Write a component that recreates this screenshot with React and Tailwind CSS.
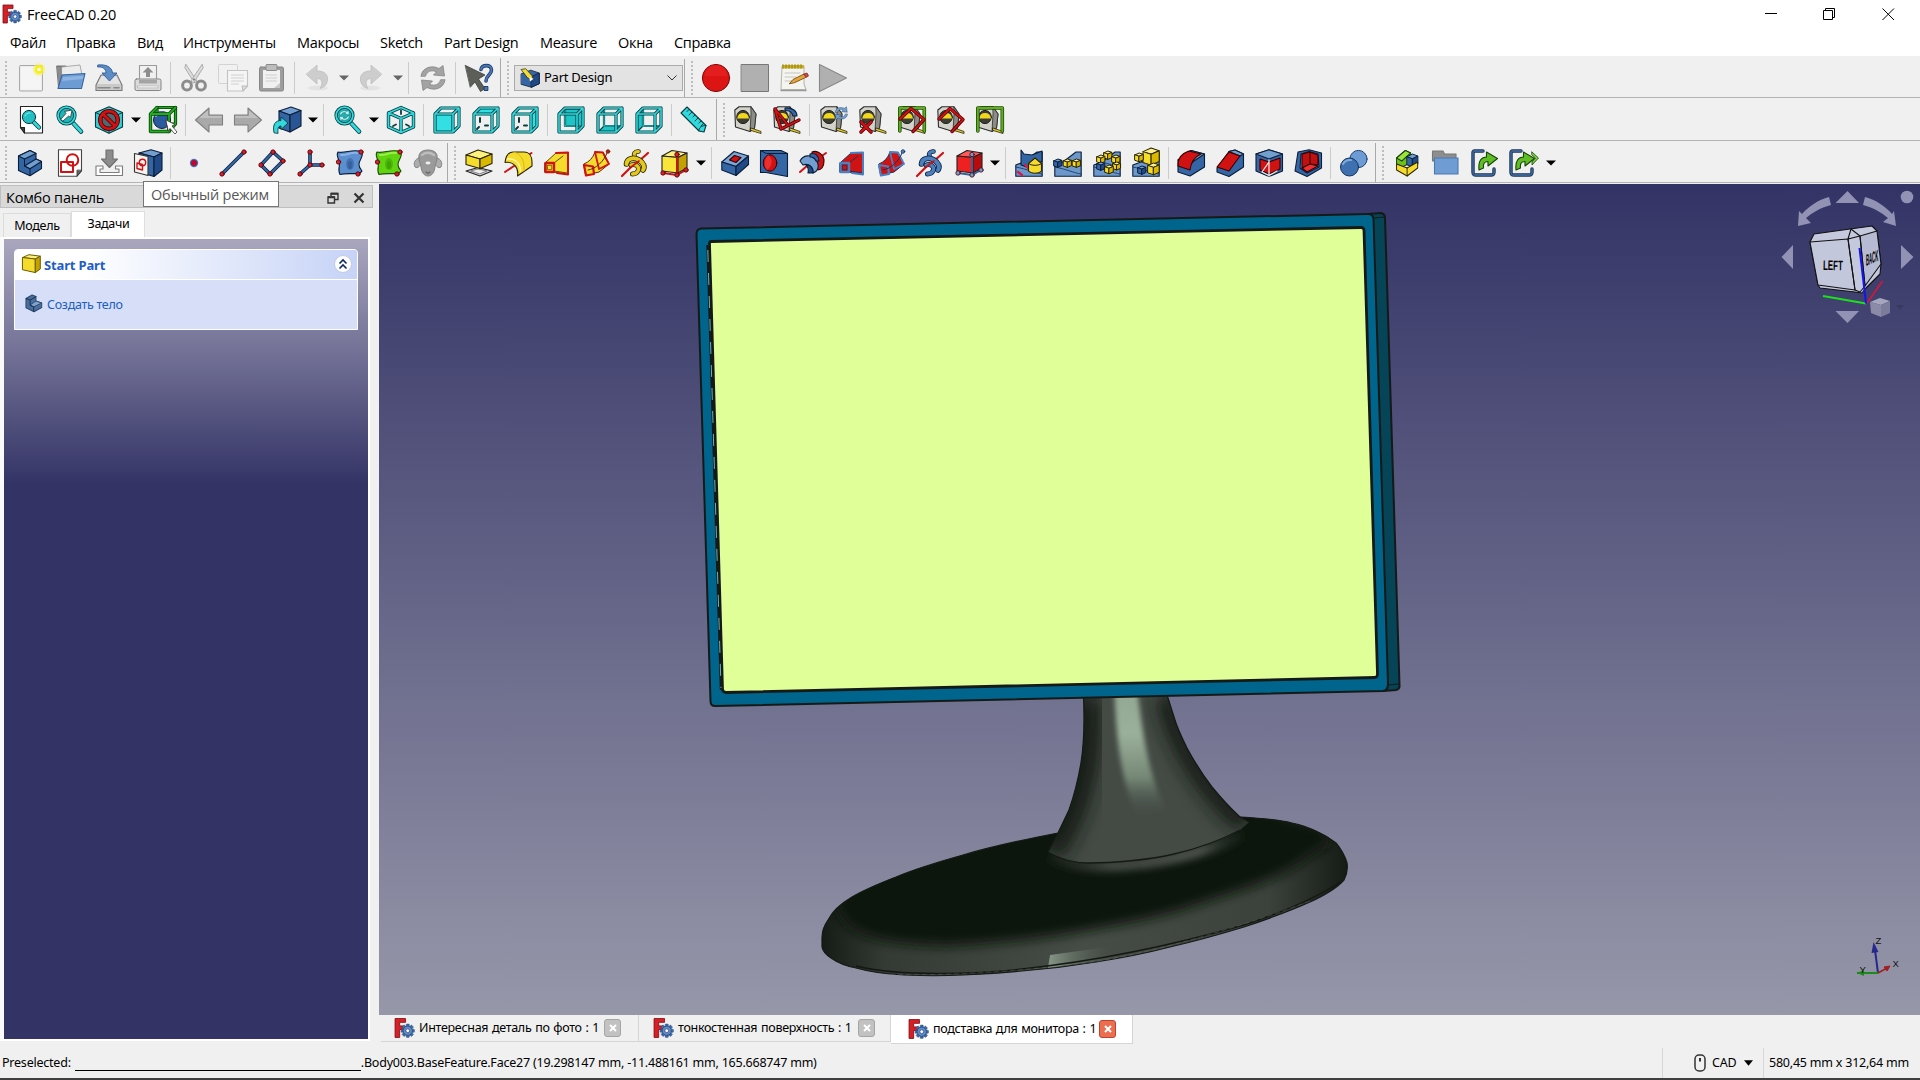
import React from "react";

const NAVY = "#0b1e38";
const BLUE = "#3465a4";
const SKY = "#729fcf";
const TEAL = "#2fd9dc";
const DTEAL = "#0a3c40";
const RED = "#d01212";
const YEL = "#f5dc2c";
const DYEL = "#c4a000";
const BROWN = "#2b2300";

/* ---------- drawing helpers ---------- */

function Icon({ children, size = "h-7 w-7" }) {
  return (
    <svg viewBox="0 0 28 28" className={`${size} shrink-0 overflow-visible`} strokeLinejoin="round" strokeLinecap="round" fill="none">
      {children}
    </svg>
  );
}

const P = ({ d, f = "none", s = NAVY, w = 1.1, ...r }) => <path d={d} fill={f} stroke={s} strokeWidth={w} {...r} />;

/* stroke with a darker outline */
const Duo = ({ d, c, o, w = 2, e = 1.6 }) => (
  <>
    <path d={d} stroke={o} strokeWidth={w + e} />
    <path d={d} stroke={c} strokeWidth={w} />
  </>
);

const Dot = ({ x, y, r = 2.2, c = "#d4202c", s = "#4a0006" }) => <circle cx={x} cy={y} r={r} fill={c} stroke={s} strokeWidth="0.8" />;

function Box({ x, y, k = 1, t, l, r, s = NAVY }) {
  return (
    <g transform={`translate(${x} ${y}) scale(${k})`}>
      <P d="M0 4 L9 0 L18 3 L9 7 Z" f={t} s={s} w={1 / k} />
      <P d="M0 4 L9 7 V19 L0 16 Z" f={l} s={s} w={1 / k} />
      <P d="M9 7 L18 3 V15 L9 19 Z" f={r} s={s} w={1 / k} />
    </g>
  );
}

const YBox = ({ x, y, k }) => <Box x={x} y={y} k={k} t="#fcf08a" l={YEL} r="#d8b800" s={BROWN} />;
const BBox = ({ x, y, k }) => <Box x={x} y={y} k={k} t={SKY} l={BLUE} r="#204a87" />;

function Logo({ className }) {
  const teeth = [0, 45, 90, 135, 180, 225, 270, 315];
  return (
    <svg viewBox="0 0 20 20" className={className}>
      <path d="M1 1 H11 V4.6 H5.4 V8 H9.5 V11.4 H5.4 V19 H1 Z" fill="#d81f26" stroke="#7c0e12" strokeWidth="0.8" />
      {teeth.map((a) => (
        <rect key={a} x="11.6" y="6.2" width="3" height="4" rx="0.6" fill="#3f6aa8" stroke="#274a7c" strokeWidth="0.4" transform={`rotate(${a} 13.1 12.6)`} />
      ))}
      <circle cx="13.1" cy="12.6" r="4.4" fill="#5f8bc6" stroke="#274a7c" strokeWidth="0.8" />
      <circle cx="13.1" cy="12.6" r="1.8" fill="#fff" stroke="#274a7c" strokeWidth="0.7" />
    </svg>
  );
}

/* ---------- file toolbar ---------- */

const NewDoc = () => (
  <Icon>
    <rect x="2.5" y="1.5" width="23" height="25.5" rx="1" fill="#ececec" stroke="#a9a9a9" />
    <rect x="4" y="3" width="20" height="22.5" fill="#f5f5f5" />
    <circle cx="22" cy="5.5" r="6.3" fill="#f6f06a" opacity=".6" />
    <circle cx="22" cy="5.5" r="4.3" fill="#f7ef1c" />
    <circle cx="22" cy="5.5" r="1.8" fill="#fff" />
  </Icon>
);
const OpenDoc = () => (
  <Icon>
    <P d="M1 2 H10 L12 5 H24 V24 H3 Z" f="#8a8a8a" s="#555" w={0.8} />
    <P d="M6 3 L24 1 L26 11 H6 Z" f="#ececec" s="#999" w={0.8} />
    <P d="M6 11 L29 9.5 L25.5 24.5 H2 Z" f="#6d9bd3" s="#3465a4" />
    <path d="M7 13 L27.5 11.7 L26.7 15 L6 17 Z" fill="#8eb5e2" />
  </Icon>
);
const SaveDoc = () => (
  <Icon>
    <P d="M6 11 H22 L27 21 V26.5 H1 V21 Z" f="#c9c9c9" s="#777" />
    <path d="M6.6 12 H21.4 L25.5 20 H2.5 Z" fill="#e3e3e3" />
    <path d="M3 23.8 H15 M19 23.8 h5" stroke="#888" strokeWidth="1.6" />
    <P d="M3 1 C11 0 17 3 17.5 9 H22 L14.5 17 L7 9 H11 C11 5 8 2.5 3 3 Z" f="#5c8cc5" s="#2e5b95" w={0.9} />
  </Icon>
);
const PrintDoc = () => (
  <Icon>
    <P d="M5.5 1.5 H22.5 V16 H5.5 Z" f="#f1f1f1" s="#9a9a9a" />
    <path d="M14 3 L19.5 8.5 H16 V13 H12 V8.5 H8.5 Z" fill="#8d8d8d" />
    <rect x="1" y="15" width="26" height="11.5" rx="1.5" fill="#dadada" stroke="#858585" />
    <rect x="5" y="16" width="18" height="3.5" fill="#a4a4a4" />
    <rect x="4" y="22" width="20" height="1.8" fill="#fff" stroke="#999" strokeWidth=".5" />
  </Icon>
);
const CutI = () => (
  <Icon>
    <P d="M6 0.5 L17 17 L14.5 19 L5 4 Z" f="#dcdcdc" s="#a5a5a5" w={0.9} />
    <P d="M22 0.5 L11 17 L13.5 19 L23 4 Z" f="#dcdcdc" s="#a5a5a5" w={0.9} />
    <ellipse cx="7" cy="21.5" rx="4.4" ry="4.6" stroke="#8c8c8c" strokeWidth="3" />
    <ellipse cx="21" cy="21.5" rx="4.4" ry="4.6" stroke="#8c8c8c" strokeWidth="3" />
    <circle cx="14" cy="15.5" r="1" fill="#777" />
  </Icon>
);
const CopyI = () => (
  <Icon>
    <rect x="-0.5" y="0.5" width="19" height="19" rx="1" fill="#f1f1f1" stroke="#d3d3d3" />
    <P d="M8.5 6.5 H28.5 V22 L24 27 H8.5 Z" f="#f5f5f5" s="#c3c3c3" />
    <path d="M12 11 H25 M12 14 H25 M12 17 H25 M12 20 H20" stroke="#d0d0d0" strokeLinecap="butt" />
    <P d="M28.5 22 L24 27 L23 22 Z" f="#ddd" s="#bbb" />
  </Icon>
);
const PasteI = () => (
  <Icon>
    <rect x="1.5" y="3" width="24" height="24" rx="1.5" fill="#9d9d9d" stroke="#868686" />
    <rect x="5" y="6" width="17" height="18" fill="#f1f1f1" />
    <rect x="8" y="0.5" width="11" height="6" rx="1" fill="#bdbdbd" stroke="#8a8a8a" />
    <path d="M7.5 11 H19 M7.5 14 H19 M7.5 17 H19" stroke="#cfcfcf" strokeLinecap="butt" />
    <path d="M22 19 V24 H16 Z" fill="#c9c9c9" />
  </Icon>
);
const UndoI = ({ flip }) => (
  <Icon>
    <g transform={flip ? "translate(28 0) scale(-1 1)" : undefined}>
      <ellipse cx="15" cy="24" rx="10" ry="2.5" fill="#e3e3e3" />
      <P d="M14 1.5 V7 C22 7 25 11 24.5 16 C24 20 22 23 17 24.5 C20.5 19 19 14.5 14 14.5 V20 L3.5 10.5 Z" f="#cdcdcd" s="#bcbcbc" w={0.8} />
    </g>
  </Icon>
);
const RefreshShape = ({ c = "#a3a3a3", o = "#858585" }) => (
  <>
    <P d="M2 12 C3 4 12 0.5 20 4.5 L24 1.5 L25.5 12 L14.5 11 L17.5 7.8 C12 5.5 8 7.5 6.5 12 Z" f={c} s={o} w={0.8} />
    <P d="M26 16 C25 24 16 27.5 8 23.5 L4 26.5 L2.5 16 L13.5 17 L10.5 20.2 C16 22.5 20 20.5 21.5 16 Z" f={c} s={o} w={0.8} />
  </>
);
const RefreshI = () => <Icon><RefreshShape /></Icon>;
const WhatsI = () => (
  <Icon>
    <P d="M0.5 1.5 L20 11 L13.5 15 L20 24.5 L15.5 27.5 L10 18 L5.5 23 Z" f="#5b5f58" s="#3c3f3a" w={0.8} />
    <Duo d="M16 5.5 C17 0.5 26.5 0 26.5 6 C26.5 11 21 11 21 17" c="#4a7ab8" o="#1d3d6b" w={1.8} e={1.8} />
    <rect x="19.5" y="22.5" width="3.4" height="4" fill="#4a7ab8" stroke="#1d3d6b" />
  </Icon>
);
const RecordI = () => (
  <Icon>
    <circle cx="14" cy="14" r="13.6" fill="#dc1414" stroke="#7d0808" />
    <path d="M3 12 A11 11 0 0 1 25 12 Z" fill="#e92424" opacity=".6" />
  </Icon>
);
const StopI = () => <Icon><rect x="0.5" y="0.5" width="27" height="27" fill="#b0b0b0" stroke="#777" /></Icon>;
const PlayI = () => <Icon><P d="M0.5 0.5 L27.5 14 L0.5 27.5 Z" f="#b0b0b0" s="#888" /></Icon>;
const NoteI = () => (
  <Icon>
    <P d="M2 2.5 H24 V20 L26 25.5 H1 Z" f="#f4f4f1" s="#b9b9b2" />
    <rect x="2" y="1" width="22" height="3.4" fill="#c9ae1e" />
    <path d="M3 0.5v4M6 0.5v4M9 0.5v4M12 0.5v4M15 0.5v4M18 0.5v4M21 0.5v4" stroke="#8d7710" strokeWidth=".8" />
    <path d="M5 9 H20 M5 13 H16 M5 17 H12" stroke="#c5c5c0" />
    <path d="M1 26.5 H26" stroke="#999" strokeWidth="1.4" />
    <P d="M9.5 19.5 L13 15.5 L24 10 L26.5 13 L15 18.5 Z" f="#e5a53d" s="#7c4a10" w={0.9} />
    <P d="M24 10 L27 9 L28.5 12 L26.5 13 Z" f="#d04a4a" s="#7c1010" w={0.7} />
  </Icon>
);

/* ---------- view toolbar ---------- */

const Lens = () => (
  <>
    <Duo d="M17.5 17.5 L25 25.5" c={TEAL} o={DTEAL} w={3} />
    <circle cx="10.5" cy="9.5" r="8.4" fill="#1fb4b8" stroke={DTEAL} strokeWidth="3.4" />
    <circle cx="10.5" cy="9.5" r="8.4" stroke={TEAL} strokeWidth="1.8" />
  </>
);
const FitAll = () => (
  <Icon>
    <P d="M3.5 0.5 H25.5 V27 H7.5 L3.5 21.5 Z" f="#fff" s="#222" />
    <P d="M3.5 21.5 H7.5 V27 Z" f="#444" s="#222" />
    <Duo d="M16 15.5 L22 21.5" c={TEAL} o={DTEAL} w={2.6} />
    <circle cx="12" cy="11" r="6.6" fill="#23bfc2" stroke={DTEAL} strokeWidth="1" />
    <path d="M8 10 a4 4 0 0 1 5 -3" stroke="#7ff" />
  </Icon>
);
const FitSel = () => (
  <Icon>
    <Lens />
    <P d="M5 13 L10 7.5 L8.5 5.5 L16 4 L14.5 11.5 L12.6 10 L7 15 Z" f="#fff" s="#333" w={0.8} />
  </Icon>
);
const DrawStyle = () => (
  <Icon>
    <P d="M14 0.8 L27.5 6.5 V21 L14 27.2 L0.5 21 V6.5 Z" f="#2fcfd2" s={DTEAL} />
    <path d="M14 13 V27 M0.5 6.5 L14 13 L27.5 6.5" stroke={DTEAL} />
    <circle cx="14" cy="14" r="8.8" fill="#4d6a70" stroke="#4a0006" strokeWidth="4.4" />
    <path d="M8 8 L20 20" stroke="#4a0006" strokeWidth="4.4" />
    <circle cx="14" cy="14" r="8.8" stroke={RED} strokeWidth="2.8" />
    <path d="M8 8 L20 20" stroke={RED} strokeWidth="2.8" />
  </Icon>
);
const BoundSel = () => (
  <Icon>
    <Duo d="M8 1.5 H26.5 V18 L20 25.5 M8 1.5 V18 H26" c="#1fae1f" o="#0a3d0a" w={1.6} />
    <circle cx="13" cy="14" r="8.5" fill="#2b5a9e" stroke={NAVY} />
    <path d="M7 10 a8 8 0 0 1 9 -3" stroke="#8bb0dd" strokeWidth="2" />
    <Duo d="M1.5 8 H20 V25.5 H1.5 Z M1.5 8 L8 1.5 M20 8 L26.5 1.5" c="#1fae1f" o="#0a3d0a" w={1.8} />
    <P d="M17 14 L26 18.5 L23 20 L28 26 L26 28 L21 22.5 L19.5 25 Z" f="#fff" s="#333" w={0.8} />
  </Icon>
);
const Arrow = ({ flip }) => (
  <Icon>
    <g transform={flip ? "translate(28 0) scale(-1 1)" : undefined}>
      <P d="M0.5 14 L14 2 V9 H27.5 V19 H14 V26 Z" f="#a9a9a9" s="#808080" />
      <path d="M13 4.5 V10 H26.5 V12 H4 Z" fill="#c0c0c0" />
    </g>
  </Icon>
);
const LinkView = () => (
  <Icon>
    <P d="M6 5 L18 1 L28 4.5 L17 9 Z" f={SKY} />
    <P d="M6 5 L17 9 V26 L6 22 Z" f={BLUE} />
    <P d="M17 9 L28 4.5 V20 L17 26 Z" f="#2a5594" />
    <P d="M1 26.5 C-1 18 3 14.5 8 14.5 V11 L15 17 L8 23.5 V20 C5 20 4.5 23 5 27 Z" f={TEAL} s={DTEAL} w={0.9} />
  </Icon>
);
const SyncView = () => (
  <Icon>
    <Lens />
    <g transform="translate(4.6 3.6) scale(.42)"><RefreshShape c="#b9f4f5" o={DTEAL} /></g>
  </Icon>
);
const IsoI = () => (
  <Icon>
    <Duo d="M14 1.5 L26.5 7 V21 L14 26.5 L1.5 21 V7 Z M1.5 7 L14 12.5 L26.5 7 M14 12.5 V26.5" c={TEAL} o={DTEAL} w={1.8} />
    <path d="M14 4.5 V8 M6 20 L9 18.5 M22 20 L19 18.5" stroke={DTEAL} strokeWidth="1.8" />
  </Icon>
);

const FACES = {
  front: "M2 8 H20 V26 H2 Z",
  top: "M2 8 L8 2 H26 L20 8 Z",
  right: "M20 8 L26 2 V20 L20 26 Z",
  rear: "M8 3 H26 V20 H8 Z",
  bottom: "M2 26 L8 20 H26 L20 26 Z",
  left: "M2 8 L8 2 V20 L2 26 Z",
};
function ViewCube({ face }) {
  const open = face === "rear" || face === "bottom" || face === "left";
  return (
    <Icon>
      {open && <P d={FACES[face]} f="#1fc4c7" s={DTEAL} />}
      {open && <Duo d="M8 2 V20 M8 20 H26" c={TEAL} o={DTEAL} w={1} e={1.2} />}
      {!open && face !== "front" && <path d="M8 12 V16 M7 21 L5 23 M13 19.5 H16" stroke={DTEAL} strokeWidth="2" />}
      {!open && <P d={FACES[face]} f="#32dfe2" s={DTEAL} />}
      <Duo d="M2 8 L8 2 H26 V20 L20 26 H2 Z M2 8 H20 V26 M20 8 L26 2" c={TEAL} o={DTEAL} w={1.6} />
    </Icon>
  );
}
const Ruler = () => (
  <Icon>
    <P d="M2 7 L8 1 L27 19.5 L25 26 L20 25 Z" f={TEAL} s={DTEAL} />
    <path d="M10 3.5 L8 5.5 M13 6 L10 9 M16 9 L14 11 M19 12 L16 15 M22 15 L20 17 M24.5 17.5 L22 20" stroke={DTEAL} />
    <path d="M20 25 C19 22 23 19 27 19.5" stroke={DTEAL} />
  </Icon>
);

function Tape({ children }) {
  return (
    <Icon>
      <P d="M0.8 4 L5 0.8 H17 L22 8 L20.5 22 L16 25.5 L1.5 21 Z" f="#d2d2cb" s="#2b2b2b" />
      <P d="M17 1 L22 8 L20.5 22 L16 25.5 L17 8 Z" f="#8d8d86" s="#2b2b2b" w={0.8} />
      <ellipse cx="9" cy="11" rx="6.3" ry="6.6" fill="#3c3c34" stroke="#222" />
      <path d="M3.2 12.5 A6 6.6 0 0 1 15 12.5 Z" fill="#f1d81c" />
      <P d="M17 22 L27 25.5 V27.5 L17 24.5 Z" f="#e9cf14" s="#222" w={0.8} />
      {children}
    </Icon>
  );
}
const Green = () => <Duo d="M1.8 25 V2 H26.3 V25" c="#5fae1e" o="#1f4a05" w={2} />;
const Diamond = () => <Duo d="M2 13 L13 2.5 L26 13.5 L15 25.5" c={RED} o="#5a0008" w={1.8} />;

/* ---------- part design toolbar ---------- */

const BodyI = () => (
  <Icon>
    <P d="M1.5 7 L13 1.5 L19 4.500 V10 L24.5 12.500 V19.500 L13 26.8 L1.5 21.5 Z" f={BLUE} />
    <P d="M1.5 7 L13 1.5 L19 4.500 L7.500 10 Z" f={SKY} />
    <P d="M7.500 17 L19 10 L24.5 12.500 L13 19.8 Z" f={SKY} />
    <path d="M7.500 10 V17 L13 19.8 V26.500" stroke={NAVY} />
  </Icon>
);
const SketchShape = () => (
  <>
    <rect x="5" y="13" width="12" height="10" stroke={RED} strokeWidth="2" />
    <circle cx="16.5" cy="11" r="5.8" stroke={RED} strokeWidth="2" />
  </>
);
const SketchI = () => (
  <Icon>
    <P d="M2.5 0.8 H25.5 V22 L21 27.2 H2.5 Z" f="#fff" s="#444" />
    <SketchShape />
    <P d="M25.5 21.5 L21 27.2 V21.5 Z" f="#666" s="#333" w={0.8} />
  </Icon>
);
const MapI = () => (
  <Icon>
    <P d="M11 1 H18 V10 H22.5 L14.5 18.5 L6.5 10 H11 Z" f="#8c8c8c" s="#6e6e6e" />
    <P d="M1 17 H8 V20 H5 V23.5 H24 V20 H20.5 V17 H27.5 V26.5 H1 Z" f="#fff" s="#7c7c7c" />
  </Icon>
);
const ValidateI = () => (
  <Icon>
    <P d="M5 4 L17 0.8 L28 4 L20 8 Z" f={SKY} />
    <P d="M5 4 L20 8 V27.5 L5 23 Z" f={BLUE} />
    <P d="M20 8 L28 4 V21 L20 27.5 Z" f="#204a87" />
    <P d="M0.5 4.5 L14 7.500 V26.5 L0.5 23 Z" f="#f7f3f0" s="#333" />
    <path d="M3 14 l5.500 1.5 v5.5 l-5.500 -1.5 Z" stroke={RED} strokeWidth="1.4" />
    <circle cx="8.5" cy="13.5" r="3.2" stroke={RED} strokeWidth="1.4" />
  </Icon>
);
const PointI = () => (
  <Icon>
    <circle cx="14" cy="14" r="4.2" fill="#4a78b5" />
    <Dot x={14} y={14} r={2.7} c="#d4002a" s="#90123c" />
  </Icon>
);
const LineI = () => (
  <Icon>
    <Duo d="M3 25 L25 3" c={BLUE} o={NAVY} w={2} />
    <Dot x={3} y={25} /><Dot x={25} y={3} />
  </Icon>
);
const PlaneI = () => (
  <Icon>
    <Duo d="M15 3 L25 12 L12 25 L3 16 Z" c={BLUE} o={NAVY} w={2} />
    <Dot x={15} y={3} /><Dot x={25} y={12} /><Dot x={12} y={25} /><Dot x={3} y={16} />
  </Icon>
);
const CsysI = () => (
  <Icon>
    <Duo d="M13 3 V16 H25 M13 16 L3 25" c={BLUE} o={NAVY} w={2} />
    <Dot x={13} y={3} /><Dot x={13} y={16} /><Dot x={25} y={16} /><Dot x={3} y={25} />
  </Icon>
);
const BinderI = ({ c, h, s, m }) => (
  <Icon>
    <P d="M2 3 C9 5 17 -1 26 3 C28.500 10 18 13 26 22 C24 27 14 23 4 25.5 C1 20 5 15 3 12 C2 8 0 6 2 3 Z" f={c} s={s} />
    <ellipse cx="14" cy="15" rx="4" ry="6" fill={m} opacity=".35" />
    <ellipse cx="14" cy="16" rx="2.200" ry="4" fill={m} opacity=".35" />
    <path d="M5 6 C10 7 14 3 21 4" stroke={h} strokeWidth="2" />
    <Dot x={25} y={3} /><Dot x={22} y={25} /><Dot x={2.5} y={13} />
  </Icon>
);
const SheepI = () => (
  <Icon>
    <P d="M5 9 C1 10 -1 14 1 18 C4 20 6 17 8 13 Z M23 9 C27 10 29 14 27 18 C24 20 22 17 20 13 Z" f="#adadad" s="#7d7d7d" w={0.9} />
    <P d="M5 9 C4 4 8 1 14 1 C20 1 24 4 23 9 C23 13 21.500 14 21 18 C20.500 23 18 27 14 27 C10 27 7.500 23 7 18 C6.500 14 5 13 5 9 Z" f="#9a9a9a" s="#7d7d7d" w={0.9} />
    <path d="M8 6 c3 -3 8 -3 12 0" stroke="#bdbdbd" strokeWidth="2.400" />
    <path d="M12 23 l2 1.5 l2 -1.5" stroke="#666" strokeWidth="1.2" />
    <ellipse cx="14" cy="14" rx="2.500" ry="1.4" fill="#eee" />
  </Icon>
);
const PadI = () => (
  <Icon>
    <P d="M1 22 L13 18.5 L27 22 L15 27 Z" f="#d8d8d8" s="#222" />
    <path d="M6 22 L13 20 L22 22 L15 24.8 Z" stroke="#666" fill="#efefef" strokeWidth=".8" />
    <P d="M1 6 L13 1 L27 5 L15 10 Z" f="#fdf07c" s={BROWN} />
    <P d="M1 6 L15 10 V19.5 L1 15.5 Z" f={YEL} s={BROWN} />
    <P d="M15 10 L27 5 V14.5 L15 19.5 Z" f="#d8b800" s={BROWN} />
  </Icon>
);
const RevolveI = () => (
  <Icon>
    <path d="M22 8 L27.500 4 M1 23 L10 17" stroke={RED} strokeWidth="2" />
    <P d="M1 13.500 C2 6 5 3 9 3 H20 C25 3 28 7 28 13 V17 L13.500 27 C15 18 9 12 1 13.500 Z" f={YEL} s={BROWN} />
    <path d="M3.500 10 C10 9 16 13 16.500 22" stroke="#fff59c" strokeWidth="1.600" />
    <path d="M9 3 C16 4 21 10 20 22" stroke="#d6b91a" strokeWidth="1" />
  </Icon>
);
const LoftI = ({ c, e, d }) => (
  <Icon>
    <P d="M2 14 L13 4 L25 3.5 V25.500 L10 23 L2 23 Z" f={c} s={d} w={1} />
    <path d="M11 14 L20 7 M11 22 L24 24" stroke={d} />
    <path d="M13 4 L25 3.500 V25.500 L14 24" stroke={e} strokeWidth="2" />
    <rect x="2.5" y="14" width="8.500" height="9" fill={c} stroke={e} strokeWidth="2.4" />
    <rect x="4.8" y="16.3" width="4" height="4.4" stroke={d} strokeWidth=".8" />
  </Icon>
);
const SweepI = ({ c, e, d, p }) => (
  <Icon>
    <P d="M2 15 C7 13 11 9 13 3 L21 3.500 C22 8 25 12 27 15 L17 23 L4 26 Z" f={c} s={d} w={1} />
    <path d="M13 3 L21 3.500 L27 15 L17 20 Z" stroke={e} strokeWidth="1.800" />
    <path d="M2 16 L11 17.500 L12 25 L4 26.500 Z" stroke={e} strokeWidth="2.200" fill={c} />
    <path d="M6 21 C14 20 22 12 25 4" stroke={d} strokeWidth="1" />
    <Dot x={26} y={2.5} r={1.8} c={p} s={d} />
  </Icon>
);
const HelixI = ({ c, o }) => (
  <Icon>
    <path d="M1 27 L10 18 M18 12 L27 4" stroke={RED} strokeWidth="2.2" />
    <Duo d="M14 8 C12 5 14 2 17.500 2.500" c={c} o={o} w={3} />
    <Duo d="M5.500 15 C6 9 13 8 18 11 C23 14 24 18 22 21" c={c} o={o} w={4} />
    <Duo d="M10 16 C15 14 19 18 17 22 C16 24 13.500 25 11.500 25" c={c} o={o} w={3.400} />
    <path d="M10 18 L18 12" stroke={RED} strokeWidth="1.6" />
  </Icon>
);
const PrimI = ({ c, t, r, e, p }) => (
  <Icon>
    <P d="M2 7 L12 1.5 L27 4 L18 8.5 Z" f={t} s="#222" />
    <P d="M2 7 L18 8.5 V24 L2 22 Z" f={c} s="#222" />
    <P d="M18 8.5 L27 4 V19 L18 24 Z" f={r} s="#222" />
    <path d="M17 6 V25 M3 24 L17 26 L26 21" stroke={e} strokeWidth="2" />
    <Dot x={17} y={5.5} c={p} /><Dot x={3} y={24} c={p} /><Dot x={17} y={26} c={p} /><Dot x={26} y={21} c={p} />
  </Icon>
);
const PocketI = () => (
  <Icon>
    <P d="M0.8 13 L13 2.5 L27.5 7 L15 17.5 Z" f="#7ba6d8" />
    <P d="M0.8 13 L15 17.5 V26.5 L0.8 21 Z" f={BLUE} />
    <P d="M15 17.5 L27.5 7 V15.5 L15 26.5 Z" f="#204a87" />
    <P d="M8.5 11 L13.5 6.5 L20 8.5 L15 13.5 Z" f={RED} s="#300" />
  </Icon>
);
const HoleI = () => (
  <Icon>
    <P d="M0.5 1.5 H21 L27.5 4.5 V27.5 L6 23.5 H0.5 Z" f={BLUE} />
    <path d="M0.5 1.500 L6.5 4.500 H27.5" stroke={NAVY} />
    <ellipse cx="10" cy="14" rx="6.8" ry="8.200" fill={RED} stroke="#300" />
    <path d="M7 21 C13 17 13 10 8.500 6.3 C4 9 4 18 7 21" fill="#e83030" />
  </Icon>
);
const GrooveI = () => (
  <Icon>
    <path d="M1 23 L9 16 M20 9 L27 4" stroke={RED} strokeWidth="2" />
    <P d="M13 3 C18 1 25 5 25 12 C25 18 22 21 19 21 L13 14 Z" f={RED} s="#300" />
    <P d="M1 12 C4 6 12 5 16 10 C21 15 20 22 14 24 C15 18 9 14 4 16 Z" f={SKY} />
    <P d="M11 5 C16 3 20 7 20 12 L17 12 C16 9 14 8 11 8 Z" f={BLUE} />
    <P d="M7 16 C11 15 14 19 14 24 L9 24 C10 20 9 18 7 16 Z" f="#204a87" />
  </Icon>
);

const Ground = () => (
  <>
    <P d="M0.8 16 L9 13 L22 3 H27.2 V27.2 H0.8 Z" f="#6c98cc" />
    <path d="M0.8 18 C12 20 20 24 27 25 M9 13 C16 15 22 17 27 17" stroke="#1c3a66" strokeWidth=".9" />
  </>
);
const MirrorI = () => (
  <Icon>
    <Ground />
    <P d="M6 1 L9 5 L17 6 L27 2 V12 L17 20 L6 16 Z" f={BLUE} />
    <path d="M10 16 l4 4 M3 23 l4 3" stroke="#d01c4c" strokeWidth="2.4" />
    <P d="M13.5 14.5 L20 9 L26.5 14.5 V22 C24 25 16 25 13.5 22 Z" f={YEL} s={BROWN} />
    <path d="M13.5 14.5 C16 17 24 17 26.5 14.5" stroke={BROWN} />
  </Icon>
);
const LinearI = () => (
  <Icon>
    <Ground />
    <BBox x={0} y={10} k={0.44} /><YBox x={9.5} y={10} k={0.44} /><YBox x={18.5} y={10} k={0.44} />
  </Icon>
);
const PolarI = () => (
  <Icon>
    <Ground />
    <YBox x={11} y={2} k={0.44} /><YBox x={4} y={6} k={0.44} /><YBox x={19} y={6} k={0.44} />
    <YBox x={20} y={13} k={0.42} /><BBox x={4} y={13} k={0.44} /><YBox x={12} y={16} k={0.46} />
  </Icon>
);
const MultiI = () => (
  <Icon>
    <Ground />
    <YBox x={11} y={-1} k={0.9} /><YBox x={3} y={4} k={0.46} /><BBox x={6} y={17} k={0.44} /><YBox x={16} y={14} k={0.62} />
  </Icon>
);
const FilletI = () => (
  <Icon>
    <P d="M1 11 L14 1.5 L27.5 5 V18 L13 27 L1 23 Z" f={BLUE} />
    <P d="M1 11 L14 1.5 L27.5 5 L14 14 Z" f={SKY} />
    <P d="M1 17 C1 9 4 5 12 2 L24 5 C17 8 14 13 13 21 Z" f={RED} s="#300" />
  </Icon>
);
const ChamferI = () => (
  <Icon>
    <P d="M1 19 L13 2.5 L19 1 L27.5 5 V18 L13 27.5 L1 23 Z" f={BLUE} />
    <P d="M13 2.5 L19 1 L27.5 5 L24 7 Z" f={SKY} />
    <P d="M1 18 L13 3 L24 7 L13 22 Z" f={RED} s="#300" />
  </Icon>
);
const DraftI = () => (
  <Icon>
    <P d="M1 5 L14 0.8 L27.5 5 V22 L14 27.5 L1 22 Z" f={BLUE} />
    <P d="M1 5 L14 0.8 L27.5 5 L14 10 Z" f={SKY} />
    <P d="M5 10 L14 13 L25 9 V20 L14 25 L5 21 Z" f={RED} s="#300" />
    <path d="M14 11 V27 M14 13 L7 23 L14 26.500 L22 22" stroke="#e6e6e6" strokeWidth="1.3" />
  </Icon>
);
const ThickI = () => (
  <Icon>
    <P d="M4 3 L15 0.8 L27.5 4 V19 L13 27.5 L1 22 Z" f={BLUE} />
    <P d="M7 5 L15 2.5 L24 5 L25 18 L13 24 L6 19 Z" f={SKY} />
    <P d="M8 5 L16 3 V15 L8 19 Z M16 3 L24 6 V16 L16 15 Z" f="#c01010" s="#300" />
    <P d="M8 19 L16 15 L24 17 L13 23 Z" f="#f03030" s="#300" />
  </Icon>
);
const BoolI = () => (
  <Icon>
    <circle cx="18.5" cy="10" r="8.6" fill="#6d9bd3" stroke="#1d4473" />
    <circle cx="9.5" cy="18" r="9" fill="#3f70b0" stroke="#16345c" />
    <path d="M3 15 a8 8 0 0 1 8 -4" stroke="#7faadb" strokeWidth="2" />
  </Icon>
);
const PartI = () => (
  <Icon>
    <g transform="translate(1.800 0) scale(.88 1)">
      <P d="M2 9 L12 1.5 L18 4 V14 L8 18 L2 15 Z" f="#6fbf1f" s="#16400a" />
      <P d="M2 9 L12 1.5 L18 4 L8 12 Z" f="#9be23c" s="#16400a" />
      <Box x={14} y={5} k={0.68} t={SKY} l={BLUE} r="#204a87" />
      <P d="M2 15 L14 19 L26 13 V19 L14 27 L2 21 Z" f={YEL} s={BROWN} />
      <path d="M14 19 V27" stroke={BROWN} />
    </g>
  </Icon>
);
const GroupI = () => (
  <Icon>
    <P d="M0.5 2 H11 L12.5 5 H24 V12 H0.5 Z" f="#8e8e8e" s="#777" />
    <P d="M2.5 9 H26 V25 H2.5 Z" f="#6f9cd3" s="#4b78b3" />
  </Icon>
);
const GreenArrow = "M8 21 C7 11 11 8 15.5 8 V3 L26.5 9.5 L17 17 V12.5 C13 12.5 12 15 12.5 19 Z";
const LinkI = () => (
  <Icon>
    <Duo d="M12 2 H4 C2 2 2 3 2 4 V23 C2 26 3 26 5 26 H20 C23 26 23 25 23 23 V20" c="#3a6296" o="#16304f" w={1.8} />
    <P d={GreenArrow} f="#5fbf22" s="#17430a" />
  </Icon>
);
const LinksI = () => (
  <Icon>
    <Duo d="M11 2 H3 C1 2 1 3 1 4 V23 C1 26 2 26 4 26 H19 C22 26 22 25 22 23 V20" c="#3a6296" o="#16304f" w={1.8} />
    <P d={GreenArrow} f="#5fbf22" s="#17430a" transform="translate(-2 0)" />
    <P d="M22 3 L28.5 9 L22 16 V13 L25.5 9 L22 6 Z" f="#7fd23a" s="#17430a" w={0.8} />
  </Icon>
);

/* ---------- toolbar pieces ---------- */

const B = ({ children }) => <div className="flex h-8 w-[39px] shrink-0 items-center justify-center">{children}</div>;
const Sep = ({ w = "w-[7px]" }) => (
  <div className={`${w} h-8 shrink-0 pl-[3px]`}><div className="h-full w-px bg-[#cbcbcb]" /></div>
);
const Drop = ({ w = "w-3.5", c = "#000" }) => (
  <div className={`${w} flex shrink-0 items-center justify-center`}>
    <svg viewBox="0 0 10 6" className="h-[6px] w-2.5"><path d="M0 0.5 H10 L5 5.5 Z" fill={c} /></svg>
  </div>
);
const Grip = ({ edge }) => (
  <div className={edge ? "flex h-full w-3 shrink-0 items-center border-l border-[#a9a9a9] pl-[6px]" : "flex h-full w-[11px] shrink-0 items-center pl-[5px]"}>
    <div className="h-[34px] w-0 border-l-2 border-dotted border-[#bdbdbd]" />
  </div>
);

const MENU = [
  ["Файл", "w-[56px]"], ["Правка", "w-[71px]"], ["Вид", "w-[46px]"], ["Инструменты", "w-[114px]"], ["Макросы", "w-[83px]"],
  ["Sketch", "w-[64px]"], ["Part Design", "w-[96px]"], ["Measure", "w-[78px]"], ["Окна", "w-[56px]"], ["Справка", "w-[78px]"],
];

function Header() {
  return (
    <>
      <div className="flex h-7 items-center bg-white pr-[25px]">
        <Logo className="ml-[2px] h-5 w-5" />
        <span className="mt-px ml-[5px] font-[Open_Sans,sans-serif] text-[14.5px] tracking-[-0.15px] text-black">FreeCAD 0.20</span>
        <svg viewBox="0 0 130 14" className="ml-auto h-3.5 w-[130px] overflow-visible" fill="none" stroke="#000" strokeWidth="1">
          <path d="M0 6.5 H12" />
          <path d="M58.5 3.5 h9 v9 h-9 Z M60.5 3.5 V1.5 H69.5 V10.5 H67.5" />
          <path d="M117.5 1.5 L129 13 M129 1.5 L117.5 13" />
        </svg>
      </div>
      <div className="flex h-7 items-center bg-white pl-[10px] font-[Open_Sans,sans-serif] text-[14.5px] tracking-[-0.3px] text-black">
        {MENU.map(([t, w]) => <div key={t} className={`${w} shrink-0 pt-px whitespace-nowrap`}>{t}</div>)}
      </div>
    </>
  );
}

function FileBar() {
  return (
    <div className="flex h-[42px] items-center border-b border-[#b4b4b4] bg-[#f0f0f0]">
      <div className="flex h-full w-[500px] shrink-0 items-center pt-[3px]">
        <Grip /><B><NewDoc /></B><B><OpenDoc /></B><B><SaveDoc /></B><B><PrintDoc /></B><Sep />
        <B><CutI /></B><B><CopyI /></B><B><PasteI /></B><Sep w="w-[6px]" />
        <B><UndoI /></B><Drop w="w-[15px]" c="#666" /><B><UndoI flip /></B><Drop w="w-[15px]" c="#666" /><Sep w="w-2" />
        <B><RefreshI /></B><Sep /><B><WhatsI /></B>
      </div>
      <div className="flex h-full w-[184px] shrink-0 items-center pt-0.5">
        <Grip edge />
        <div className="ml-[2px] flex h-[26px] w-[169px] items-center border border-[#ababab] bg-[#e3e3e3] pl-[5px]">
          <Icon size="h-5 w-5">
            <P d="M2 8 L15 3 L27 7 V22 L16 27 L2 23 Z" f={BLUE} />
            <P d="M16 12 L27 7 V22 L16 27 Z" f="#204a87" />
            <P d="M2 2 L8 1 L17 11 L18 17 L11 14 Z" f="#f0dc3c" s="#3a3200" />
            <path d="M13 13 l6 2 l-5 4 Z" fill="#fff" />
          </Icon>
          <span className="ml-1 font-[Noto_Sans,sans-serif] text-[13px] tracking-[-0.25px] text-black">Part Design</span>
          <svg viewBox="0 0 10 6" className="mr-[5px] ml-auto h-[6px] w-2.5" fill="none" stroke="#333"><path d="M0.5 0.5 L5 5 L9.5 0.5" /></svg>
        </div>
      </div>
      <div className="flex h-full items-center pt-[3px]">
        <Grip edge /><B><RecordI /></B><B><StopI /></B><B><NoteI /></B><B><PlayI /></B>
      </div>
    </div>
  );
}

function ViewBar() {
  return (
    <div className="flex h-[43px] items-center border-b border-[#b4b4b4] bg-[#f0f0f0]">
      <div className="flex h-full w-[716px] shrink-0 items-center pt-px">
        <Grip /><B><FitAll /></B><B><FitSel /></B><B><DrawStyle /></B><Drop w="w-[15px]" /><B><BoundSel /></B><Sep />
        <B><Arrow /></B><B><Arrow flip /></B><B><LinkView /></B><Drop /><Sep w="w-2" />
        <B><SyncView /></B><Drop /><B><IsoI /></B><Sep w="w-[7px]" />
        <B><ViewCube face="front" /></B><B><ViewCube face="top" /></B><B><ViewCube face="right" /></B><Sep />
        <B><ViewCube face="rear" /></B><B><ViewCube face="bottom" /></B><B><ViewCube face="left" /></B><Sep w="w-[5px]" />
        <B><Ruler /></B>
      </div>
      <div className="flex h-full items-center pt-px">
        <Grip edge /><B><Tape /></B>
        <B><Tape><Duo d="M2 3 L8 23 L26 14 M2 3 L14 18" c={RED} o="#5a0008" w={1.8} /><P d="M12 2 C19 1 24 5 24 10 L20 10 C19 6 16 4 12 5 Z" f={BLUE} /></Tape></B>
        <Sep w="w-2" />
        <B><Tape><g transform="translate(14 0) scale(.52)"><RefreshShape c={SKY} o="#1d3d6b" /></g></Tape></B>
        <B><Tape><Duo d="M2 16 L12 26 M12 16 L2 26" c={RED} o="#5a0008" w={2} /></Tape></B>
        <B><Tape><Green /><Diamond /></Tape></B>
        <B><Tape><Diamond /></Tape></B>
        <B><Tape><Green /></Tape></B>
      </div>
    </div>
  );
}

function DesignBar() {
  return (
    <div className="flex h-[42px] items-center border-b border-[#b4b4b4] bg-[#f0f0f0]">
      <div className="flex h-full w-[447px] shrink-0 items-center pt-[2px]">
        <Grip /><B><BodyI /></B><B><SketchI /></B><B><MapI /></B><B><ValidateI /></B><Sep />
        <B><PointI /></B><B><LineI /></B><B><PlaneI /></B><B><CsysI /></B>
        <B><BinderI c="#5c8fd0" h="#8db4e4" s={NAVY} m="#1a3f7c" /></B>
        <B><BinderI c="#5fd40f" h="#9bf04a" s="#1c4a05" m="#2a8005" /></B>
        <B><SheepI /></B>
      </div>
      <div className="flex h-full w-[928px] shrink-0 items-center pt-[2px]">
        <Grip edge /><B><PadI /></B><B><RevolveI /></B>
        <B><LoftI c={YEL} e={RED} d="#5a4a00" /></B><B><SweepI c={YEL} e={RED} d="#5a2a00" p={RED} /></B>
        <B><HelixI c="#e3c81e" o={BROWN} /></B><B><PrimI c="#f9e43a" t="#fdf07c" r={DYEL} e="#c01818" p="#d4202c" /></B><Drop w="w-[15px]" /><Sep />
        <B><PocketI /></B><B><HoleI /></B><B><GrooveI /></B>
        <B><LoftI c={RED} e="#4a7fc0" d="#16345c" /></B><B><SweepI c={RED} e="#4a7fc0" d="#16345c" p="#4a7fc0" /></B>
        <B><HelixI c="#4a7fc0" o={NAVY} /></B><B><PrimI c="#ee2020" t="#ff5a5a" r="#b80c0c" e="#34629c" p={SKY} /></B><Drop w="w-[14px]" /><Sep />
        <B><MirrorI /></B><B><LinearI /></B><B><PolarI /></B><B><MultiI /></B><Sep w="w-[6px]" />
        <B><FilletI /></B><B><ChamferI /></B><B><DraftI /></B><B><ThickI /></B><Sep /><B><BoolI /></B>
      </div>
      <div className="flex h-full items-center pt-[2px]">
        <Grip edge /><B><PartI /></B><B><GroupI /></B><B><LinkI /></B><B><LinksI /></B><Drop w="w-4" />
      </div>
    </div>
  );
}

/* ---------- side panel ---------- */

function SidePanel() {
  return (
    <div className="flex w-[379px] shrink-0 flex-col pt-px font-[Noto_Sans,sans-serif] text-black">
      <div className="relative flex h-[23px] w-[373px] items-center border border-[#bfbfbf] bg-[#d9d9d9] pl-[5px]">
        <span className="pt-[3px] font-[Open_Sans,sans-serif] text-[14.5px] tracking-[-0.2px]">Комбо панель</span>
        <svg viewBox="0 0 12 12" className="mt-[2px] mr-[14px] ml-auto h-3 w-3" fill="none" stroke="#333" strokeWidth="1.4">
          <path d="M1 5 H7.5 V11 H1 Z M4 4 V1.5 H11 V7.5 H8" /><path d="M1 5.2 H7.5 M4 1.8 H11" strokeWidth="2" />
        </svg>
        <svg viewBox="0 0 12 12" className="mt-[2px] mr-[7px] h-3 w-3" stroke="#333" strokeWidth="2.2"><path d="M1.500 1.500 L10.500 10.500 M10.500 1.500 L1.500 10.500" /></svg>
        <div className="absolute top-[-5px] left-[142px] flex h-[26px] w-[136px] items-center justify-center border border-[#767676] bg-white pt-px pr-[2px] font-[Open_Sans,sans-serif] text-[14.5px] tracking-[-0.2px] whitespace-nowrap text-[#575757]">
          Обычный режим
        </div>
      </div>
      <div className="flex h-[29px] items-end pl-[3px] text-[12.5px] tracking-[-0.3px]">
        <div className="flex h-6 w-[68px] items-center justify-center border border-b-0 border-[#dcdcdc] pt-px">Модель</div>
        <div className="flex h-[26px] w-[74px] items-center justify-center border border-b-0 border-[#dedede] bg-white pl-px">Задачи</div>
      </div>
      <div className="h-[804px] w-[370px] shrink-0 border-y-2 border-r-2 border-l-4 border-white border-l-[#fafafa] bg-[linear-gradient(180deg,#a9a6be_0px,#333366_245px)] px-[10px] pt-[10px]">
        <div className="flex h-[81px] w-[344px] flex-col overflow-hidden rounded-t-[4px] border border-white bg-[#d6dff7]">
          <div className="flex h-[30px] items-center border-b border-white bg-[linear-gradient(90deg,#ffffff_20%,#c6d3f7)] pr-[5px] pl-[6px]">
            <svg viewBox="0 0 28 28" className="h-5 w-5" strokeLinejoin="round">
              <P d="M2 5 L11 1 L27 3 L20 7 Z" f="#fdf07c" s="#6b5c00" w={1.4} />
              <P d="M2 5 L20 7 V26 L2 22 Z" f={YEL} s="#6b5c00" w={1.4} />
              <P d="M20 7 L27 3 V21 L20 26 Z" f={DYEL} s="#6b5c00" w={1.4} />
            </svg>
            <span className="mt-[2px] ml-[3px] text-[13px] font-bold tracking-[-0.15px] text-[#215dc6]">Start Part</span>
            <div className="ml-auto flex h-[18px] w-[18px] items-center justify-center rounded-full border border-[#c3cbe2] bg-white">
              <svg viewBox="0 0 10 12" className="h-3 w-2.5" fill="none" stroke="#0a2a6b" strokeWidth="1.6"><path d="M1.5 5.5 L5 2 L8.5 5.5 M1.5 10.5 L5 7 L8.5 10.5" /></svg>
            </div>
          </div>
          <div className="flex h-[50px] items-center pl-[10px]">
            <Icon size="mb-[2px] h-[18px] w-[18px]">
              <P d="M1.5 7 L11 1.5 L17 4 V11 L26 14 V21 L14 27.5 L1.5 21.5 Z" f="#4a6f9e" s="#2c4a70" w={1.6} />
              <P d="M8 17 L17 11 L26 14 L13.5 20 Z" f="#82a3c9" s="#2c4a70" w={1.4} />
              <path d="M8 9.5 V17 L13.5 20 V27 M2 7 L8 9.5 L17 4" stroke="#1d3350" strokeWidth="1.6" />
            </Icon>
            <span className="mt-[2px] ml-[4px] text-[12.5px] tracking-[-0.3px] text-[#215dc6]">Создать тело</span>
          </div>
        </div>
      </div>
    </div>
  );
}

/* ---------- 3D scene ---------- */

const BASE = "M1058 833 C1022 840 990 847 963 855 C938 862 915 869 896 877 C878 884 862 891 852 897 C840 904 832 912 828 920 C823 927 822 932 822 938 V947 C823 952 826 955 831 958 C838 963 846 966 856 968 C870 972 886 974 904 975 C924 976 944 976 963 975 C985 974 1003 973 1022 971 C1048 969 1072 966 1096 962 C1122 958 1147 953 1170 947 C1196 941 1221 934 1244 927 C1268 919 1290 911 1310 902 C1325 895 1337 888 1344 880 C1347 874 1348 869 1347 863 C1345 856 1341 849 1336 843 C1331 839 1325 835 1318 832 C1310 828 1302 825 1292 823 C1275 819 1257 818 1240 817 Z";
const NECK_LEFT = "M1083.5 696 C1084 705 1084 712 1084 720 C1084 736 1083 750 1081 763 C1078 780 1074 796 1069 810 L1058 833 L1048 852";
const NECK_RIGHT = "M1167 695 L1174 717 C1177 728 1182 738 1187 748 C1194 761 1202 774 1212 787 C1221 798 1230 808 1240 817 L1249 822";
const NECK = `${NECK_LEFT} C1058 858 1072 863 1089 863 C1100 863 1111 863 1122 862 C1140 860 1157 858 1174 854 C1187 851 1200 848 1211 843 C1223 839 1232 835 1240 830 L1249 822 L1240 817 C1230 808 1221 798 1212 787 C1202 774 1194 761 1187 748 C1182 738 1177 728 1174 717 L1167 695 Z`;

function Scene() {
  return (
    <svg viewBox="379 184 1541 831" className="block h-[831px] w-[1541px] shrink-0" strokeLinejoin="round" fill="none">
      <defs>
        <linearGradient id="bg" x1="0" y1="0" x2="0" y2="1"><stop offset="0" stopColor="#333366" /><stop offset="1" stopColor="#9797aa" /></linearGradient>
        <linearGradient id="rim" x1="822" x2="1348" y1="0" y2="0" gradientUnits="userSpaceOnUse">
          <stop offset="0" stopColor="#151b15" /><stop offset=".12" stopColor="#343b34" /><stop offset=".5" stopColor="#464d46" /><stop offset=".85" stopColor="#3b423b" /><stop offset="1" stopColor="#151b15" />
        </linearGradient>
        <linearGradient id="fade" x1="0" x2="0" y1="690" y2="815" gradientUnits="userSpaceOnUse">
          <stop offset="0" stopColor="#93a893" /><stop offset=".35" stopColor="#9bb09b" /><stop offset=".7" stopColor="#758876" /><stop offset="1" stopColor="#4a544c" stopOpacity="0" />
        </linearGradient>
        <linearGradient id="shine" x1="1050" x2="1110" y1="0" y2="0" gradientUnits="userSpaceOnUse"><stop offset="0" stopColor="#849484" /><stop offset="1" stopColor="#545e54" stopOpacity="0" /></linearGradient>
        <linearGradient id="fillet" x1="1050" x2="1250" y1="0" y2="0" gradientUnits="userSpaceOnUse">
          <stop offset="0" stopColor="#2a312a" stopOpacity=".3" /><stop offset=".3" stopColor="#404740" /><stop offset=".75" stopColor="#4a514a" /><stop offset="1" stopColor="#2a312a" stopOpacity="0" />
        </linearGradient>
        <filter id="b8" x="-50%" y="-20%" width="200%" height="140%"><feGaussianBlur stdDeviation="9" /></filter>
        <filter id="b5" x="-10%" y="-20%" width="120%" height="140%"><feGaussianBlur stdDeviation="6" /></filter>
        <filter id="b3" x="-10%" y="-50%" width="120%" height="200%"><feGaussianBlur stdDeviation="3.5" /></filter>
        <filter id="b2" x="-50%" y="-10%" width="200%" height="120%"><feGaussianBlur stdDeviation="2.5" /></filter>
        <clipPath id="cb"><path d={BASE} /></clipPath>
        <clipPath id="cn"><path d={NECK} /></clipPath>
      </defs>
      <rect x="379" y="184" width="1541" height="831" fill="url(#bg)" />

      {/* stand base */}
      <path d={BASE} fill="url(#rim)" />
      <g clipPath="url(#cb)">
        <path filter="url(#b5)" fill="#10160f" d="M834 900 C842 935 870 944 948 946 C1010 943 1060 937 1133 922 C1160 917 1190 908 1212 900 C1250 888 1285 876 1304 860 C1325 845 1335 850 1325 828 L1240 800 L1058 815 L850 880 Z" />
        <path filter="url(#b3)" stroke="url(#fillet)" strokeWidth="12" d="M1050 856 C1085 873 1170 868 1244 834" />
        <path d="M1050 955 L1108 947 L1118 958 L1048 968 Z" fill="url(#shine)" />
      </g>
      <path d={BASE} stroke="#141a14" strokeWidth="1.2" />
      <path d="M856 966 C900 977 980 974 1022 969 C1096 961 1170 946 1244 925 C1280 913 1315 899 1340 882" stroke="#141814" strokeWidth="1.5" />
      <path d="M890 974.5 C960 976 1030 970 1096 961.5 C1160 951 1250 924 1310 901" stroke="#808880" strokeWidth=".6" strokeDasharray="5 3" opacity=".5" />

      {/* neck */}
      <path d={NECK} fill="#444b45" />
      <g clipPath="url(#cn)">
        <path d={NECK_LEFT} stroke="#141c15" strokeWidth="34" filter="url(#b8)" />
        <path d={NECK_RIGHT} stroke="#141c15" strokeWidth="26" filter="url(#b8)" />
        <path d="M1114 680 C1116 730 1118 770 1136 815 L1166 810 C1148 775 1142 730 1136 680 Z" fill="url(#fade)" filter="url(#b2)" />
      </g>
      <path d="M1048 852 C1058 858 1072 863 1089 863 C1111 863 1150 860 1174 854 C1200 848 1223 839 1240 830" stroke="#151a15" strokeWidth="1.3" />
      <path d={NECK_LEFT} stroke="#151a15" strokeWidth="1.3" />
      <path d={NECK_RIGHT} stroke="#151a15" strokeWidth="1.3" />

      {/* display */}
      <path d="M1368 214 L1381 213 Q1385 214 1385 218 L1399.5 685 Q1400 689 1396 690 L1383 691 Z" fill="#064457" stroke="#151a18" strokeWidth="2" />
      <path d="M701 228.5 L1368 214 Q1373 214 1373.5 219 L1388 684 Q1388 690.5 1383 691 L715 706 Q710.500 706 710.500 701 L696.500 234 Q696.500 229 701 228.5 Z" fill="#00658c" stroke="#151a18" strokeWidth="2" />
      <path d="M1374 218 L1385 217 M1388 685 L1399 684" stroke="#151a18" strokeWidth="1.2" />
      <path d="M711 241.500 L1361 227.500 Q1363.5 227.500 1364 230 L1377.5 674 Q1377.5 677 1375 677.5 L726 692.5 Q722.5 692 722.5 689 L709.500 244 Q709.500 241.500 711 241.500 Z" fill="#e1ff99" stroke="#151a18" strokeWidth="2.8" />
      <path d="M707.5 245 L721 690" stroke="#151a18" strokeWidth="2.400" />
      <path d="M707.8 250 L721 688" stroke="#6fb0b4" strokeWidth="1" strokeDasharray="12 11" />

      {/* navigation cube */}
      <g fill="#9292b4">
        <path d="M1847.500 191 L1859 203 H1835.5 Z M1847.500 323 L1835.5 311 H1859 Z M1781.5 257 L1793 245 V269 Z M1913.5 257 L1901 245 V269 Z" />
        <circle cx="1907" cy="197" r="6.3" />
        <path d="M1829 197 L1831 205 C1820 208 1812 213 1806 218 L1811 223 L1798 226 L1799 211 L1802 214 C1809 206 1818 200 1829 197 Z" />
        <path d="M1865 197 L1863 205 C1874 208 1882 213 1888 218 L1883 222 L1896 226 L1894 211 L1892 214 C1885 206 1876 200 1865 197 Z" />
      </g>
      <g stroke="#111" strokeWidth="1.1">
        <path d="M1810 242 L1814 234 L1850 229 L1872 226 L1877 231 L1881 264 L1880 274 L1866 288 L1862 293 L1855 292 L1820 288 L1818 285 Z" fill="#c5c9dd" />
        <path d="M1810 242 L1848 239 L1855 290 L1818 285 Z" fill="#c3c7dc" />
        <path d="M1860 236 L1877 231 L1881 264 L1865 286 Z" fill="#b6bad2" />
        <path d="M1848 239 L1851 229 L1860 236 L1865 286 L1860 292 L1855 290 Z M1848 239 L1860 236" />
      </g>
      <text fontFamily="Liberation Sans, sans-serif" fontSize="14" fontWeight="bold" textLength="34" lengthAdjust="spacingAndGlyphs" fill="#000" transform="translate(1823 270) rotate(1) scale(.58 1)">LEFT</text>
      <text fontFamily="Liberation Sans, sans-serif" fontSize="16" fontWeight="bold" textLength="34" lengthAdjust="spacingAndGlyphs" fill="#000" transform="translate(1866 266) skewY(-24) scale(.36 1)">BACK</text>
      <path d="M1823 296 L1866 303.5" stroke="#1be01b" strokeWidth="2" />
      <path d="M1867 303 L1882.5 281" stroke="#d01838" strokeWidth="1.8" />
      <path d="M1859.5 248 L1866 303.5" stroke="#1414ec" strokeWidth="2" />
      <path d="M1870 302 L1880 298 L1890 301 L1881 305 Z" fill="#a5a5bd" />
      <path d="M1870 302 L1881 305 V317 L1871 313 Z" fill="#8b8ba8" />
      <path d="M1881 305 L1890 301 V313 L1881 317 Z" fill="#7b7b9b" />
      <path d="M1896 305 H1904 L1900 310 Z" fill="#3a3a60" />

      {/* axis cross */}
      <path d="M1878 973 L1874.5 946" stroke="#28288c" strokeWidth="2" /><path d="M1871.5 953 L1873.5 942 L1878.5 952 Z" fill="#28288c" />
      <path d="M1878 973 H1857" stroke="#1a8a1a" strokeWidth="2" /><path d="M1857 973 L1864 970 V976 Z" fill="#1a8a1a" />
      <path d="M1878 973 L1888 967.5" stroke="#a02020" strokeWidth="1.6" /><path d="M1890 966 L1884 967 L1887 971 Z" fill="#a02020" stroke="#a02020" />
      <g fontFamily="Liberation Sans, sans-serif" fontSize="9.5" fill="#111"><text x="1875.5" y="944">Z</text><text x="1892.5" y="967">X</text><text x="1859.5" y="973">Y</text></g>
    </svg>
  );
}

/* ---------- document tabs and status ---------- */

function Tab({ title, w, pad, active }) {
  const look = active ? "h-[29px] border-[#d5d5d5] bg-white" : "h-[27px] border-[#d5d5d5] bg-[#f0f0f0]";
  return (
    <div className={`${look} ${w} ${pad} flex shrink-0 items-center border-r border-b`}>
      <Logo className="h-[22px] w-[21px]" />
      <span className="ml-1 flex-1 text-[12.5px] tracking-[-0.3px] whitespace-nowrap [word-spacing:0.8px]">{title}</span>
      <div className={`flex h-[18px] w-[17px] items-center justify-center rounded-[3px] border ${active ? "border-[#c4402a] bg-[#ea6f50]" : "border-[#a5a5a5] bg-[#c2c2c2]"}`}>
        <svg viewBox="0 0 8 8" className="h-2 w-2" stroke="#fff" strokeWidth="2"><path d="M1 1 L7 7 M7 1 L1 7" /></svg>
      </div>
    </div>
  );
}

export default function App() {
  return (
    <div className="flex h-[1080px] w-[1920px] flex-col overflow-hidden bg-[#f0f0f0]">
      <Header />
      <FileBar />
      <ViewBar />
      <DesignBar />
      <div className="flex min-h-0 flex-1 pt-px">
        <SidePanel />
        <div className="flex w-[1541px] flex-col font-[Noto_Sans,sans-serif] text-black">
          <Scene />
          <div className="flex h-[29px] items-start pl-[2px]">
            <Tab title="Интересная деталь по фото : 1" w="w-[258px]" pad="pl-[13px] pr-[17px]" />
            <Tab title="тонкостенная поверхность : 1" w="w-[252px]" pad="pl-[14px] pr-[15px]" />
            <Tab title="подставка для монитора : 1" w="w-[242px]" pad="pl-[17px] pr-[16px]" active />
          </div>
        </div>
      </div>
      <div className="flex h-[34px] shrink-0 items-center pt-[4px] font-[Noto_Sans,sans-serif] text-[12.5px] tracking-[-0.22px] text-black">
        <span className="ml-[2px] whitespace-nowrap">Preselected:</span>
        <span className="mt-[14px] ml-1 h-px w-[286px] bg-black" />
        <span className="whitespace-nowrap">.Body003.BaseFeature.Face27 (19.298147 mm, -11.488161 mm, 165.668747 mm)</span>
        <div className="ml-auto flex h-[30px] w-[101px] items-center border-l border-[#d7d7d7] pl-[31px]">
          <svg viewBox="0 0 12 18" className="h-[18px] w-3" fill="none" stroke="#333" strokeWidth="1.5"><rect x="1" y="1" width="10" height="16" rx="4" /><path d="M6 4 V7.5" strokeWidth="2" /></svg>
          <span className="ml-[6px]">CAD</span>
          <svg viewBox="0 0 10 6" className="ml-2 h-[6px] w-[9px]"><path d="M0 0 H10 L5 6 Z" fill="#000" /></svg>
        </div>
        <div className="flex h-[30px] w-[157px] items-center border-l border-[#d7d7d7] pl-[5px] whitespace-nowrap">580,45 mm x 312,64 mm</div>
      </div>
      <div className="h-[2px] shrink-0 bg-[#3f3f3f]" />
    </div>
  );
}
